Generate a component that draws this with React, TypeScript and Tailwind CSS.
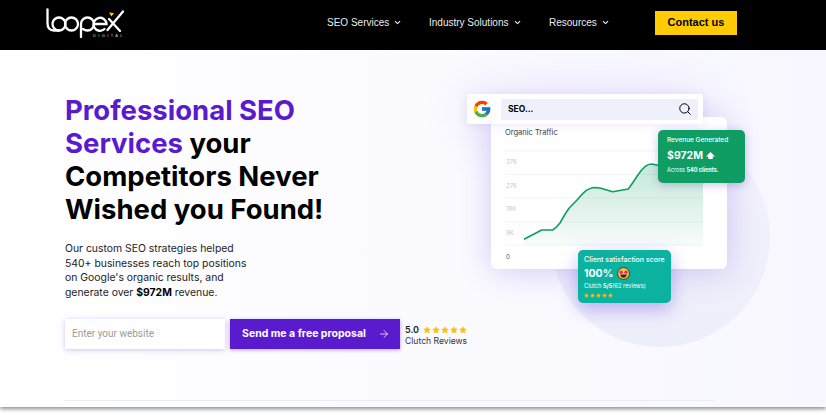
import { ArrowRight, ChevronDown, Search, Star } from 'lucide-react';
import { FcGoogle } from 'react-icons/fc';

const navItems = [
  { label: 'SEO Services', width: 'w-[102px]' },
  { label: 'Industry Solutions', width: 'w-[120px]' },
  { label: 'Resources', width: 'w-[106px]' },
];

const line = 'M524 239.3 L541.7 230 L552.7 230 Q556 228 560 223 Q565 214 569 208.3 Q573 204 577 200 Q582 194 586 190.7 Q590 188 592.7 187.7 Q597 187.5 600 188 L612.7 191.7 L628.3 189 Q632 184 636.7 176.7 Q641 170 645 166.7 Q648 164 651.7 164 L660 165.7 L672 170 L703 150';

function Logo() {
  return (
    <div className="relative w-[80px] h-[40px]">
      <svg viewBox="44 6 80 34" className="w-[80px] h-[34px]" fill="none" stroke="#fff" strokeWidth="2.3" strokeLinecap="round">
        <path d="M46.5 9.5 V23 Q46.5 30.5 53 30.5 L58 30.5" />
        <circle cx="58" cy="24" r="6.5" />
        <circle cx="70.5" cy="24" r="6.5" />
        <path d="M80 37 V24 A6.5 6.5 0 1 1 86.5 30.5 Q84 30.5 82 29" />
        <path d="M93 24 H105.5 A6.5 6.5 0 1 0 103.5 29" />
        <path d="M106.5 30 L122 11.5" />
        <path d="M108 19 L119 31" />
        <path d="M108 12.5 L113 13 L110.5 16.5 Z" fill="#ffcb05" stroke="none" />
      </svg>
      <span className="absolute right-0 top-[28px] text-[4px] leading-none tracking-[2.4px] text-[#cfcfcf] font-['Liberation_Sans',sans-serif]">DIGITAL</span>
    </div>
  );
}

function Stars({ size, gap }: { size: string; gap: string }) {
  return (
    <span className={`flex ${gap}`}>
      {[0, 1, 2, 3, 4].map((i) => (
        <Star key={i} className={`${size} text-[#fdc015] fill-[#fdc015]`} strokeWidth={1} />
      ))}
    </span>
  );
}

function StarFace() {
  return (
    <svg viewBox="0 0 24 24" className="w-[13px] h-[13px]">
      <circle cx="12" cy="12" r="11" fill="#f7c23c" stroke="#3a2a1a" strokeWidth="1.6" />
      <circle cx="7.5" cy="9.5" r="3" fill="#e5237f" />
      <circle cx="16.5" cy="9.5" r="3" fill="#e5237f" />
      <path d="M6 14 H18 Q17 20 12 20 Q7 20 6 14 Z" fill="#3a2a1a" />
    </svg>
  );
}

function Chart() {
  return (
    <div className="relative w-[236px] h-[152px] bg-white rounded-md shadow-[0_2px_32px_rgba(120,90,220,0.3)] pl-[14px] pt-[11px]">
      <p className="text-[7.5px] leading-[10px] text-[#3b3b4f] font-['Inter',sans-serif]">Organic Traffic</p>
      <svg viewBox="491 117 236 152" className="absolute inset-0 w-[236px] h-[152px]" fill="none">
        <defs>
          <linearGradient id="area" x1="0" y1="0" x2="0" y2="1">
            <stop offset="0" stopColor="#0f9d63" stopOpacity="0.28" />
            <stop offset="1" stopColor="#0f9d63" stopOpacity="0.03" />
          </linearGradient>
        </defs>
        {[151, 174.5, 198, 222, 245].map((y) => (
          <path key={y} d={`M505 ${y} H703`} stroke="#f0f0f5" strokeWidth="0.8" />
        ))}
        <path d={`${line} V245.5 H524 Z`} fill="url(#area)" />
        <path d={line} stroke="#0f9d63" strokeWidth="1.6" strokeLinejoin="round" />
      </svg>
      {[
        { t: '37K', c: 'top-[41px] text-[#c4c4cf]' },
        { t: '27K', c: 'top-[65px] text-[#c4c4cf]' },
        { t: '18K', c: 'top-[88px] text-[#c4c4cf]' },
        { t: '9K', c: 'top-[112px] text-[#c4c4cf]' },
        { t: '0', c: 'top-[136px] text-[#555]' },
      ].map((l) => (
        <span key={l.t} className={`absolute left-[15px] text-[6px] leading-[8px] font-['Inter',sans-serif] ${l.c}`}>{l.t}</span>
      ))}
    </div>
  );
}

export default function App() {
  return (
    <div className="w-[826px] h-[415px] overflow-hidden bg-white flex flex-col font-['Inter',sans-serif]">
      <header className="h-[50px] shrink-0 bg-black flex items-center pl-[45px] pb-[5px] relative z-10">
        <div className="w-[282px] pt-[7px]">
          <Logo />
        </div>
        <nav className="flex items-center font-['Liberation_Sans',sans-serif] text-[10px] text-[#ececec]">
          {navItems.map((item) => (
            <a key={item.label} className={`flex items-center gap-[4px] ${item.width}`}>
              {item.label}
              <ChevronDown className="w-[9px] h-[9px]" strokeWidth={3} />
            </a>
          ))}
        </nav>
        <button className="w-[82px] h-[24px] bg-[#ffcb05] text-black font-bold text-[11px] font-['Liberation_Sans',sans-serif]">
          Contact us
        </button>
      </header>

      <main className="relative h-[357px] shrink-0 overflow-hidden flex bg-gradient-to-r from-white via-[#fbfbff] to-[#f8f7ff] shadow-[0_2px_4px_rgba(0,0,0,0.45)]">
        {/* Left: copy + form */}
        <section className="w-[402px] shrink-0 pl-[65px] pt-[44px]">
          <h1 className="text-[27.5px] leading-[33px] font-bold text-black">
            <span className="text-[#5a1bcf]">Professional SEO</span>
            <br />
            <span className="text-[#5a1bcf]">Services</span> your
            <br />
            Competitors Never
            <br />
            Wished you Found!
          </h1>
          <p className="mt-[16px] text-[10.4px] leading-[14.7px] text-[#222]">
            Our custom SEO strategies helped<br />
            540+ businesses reach top positions<br />
            on Google's organic results, and<br />
            generate over <b className="text-black">$972M</b> revenue.
          </p>
          <div className="mt-[18px] flex items-center">
            <input
              placeholder="Enter your website"
              className="w-[160px] h-[30px] shrink-0 bg-white px-[7px] text-[10px] font-['Roboto',sans-serif] text-[#555] placeholder:text-[#9a9a9a] outline-none shadow-[0_1px_5px_rgba(90,27,207,0.28)]"
            />
            <button className="ml-[5px] w-[170px] h-[30px] shrink-0 bg-[#5a1bcf] text-white text-[10.5px] font-bold flex items-center justify-between pl-[12px] pr-[10px] shadow-[0_1px_4px_rgba(90,27,207,0.4)]">
              Send me a free proposal
              <ArrowRight className="w-[12px] h-[12px]" strokeWidth={1.5} />
            </button>
            <div className="ml-[5px] mt-[4px] shrink-0">
              <div className="flex items-center gap-[4px] text-[9px] leading-[11px] font-semibold text-[#222]">
                5.0 <Stars size="w-[8px] h-[8px]" gap="gap-[1px]" />
              </div>
              <p className="text-[8.6px] leading-[12px] text-[#333]">Clutch Reviews</p>
            </div>
          </div>
        </section>

        {/* Right: illustration */}
        <section className="relative flex-1">
          <div className="absolute left-[148px] top-[77px] w-[220px] h-[220px] rounded-full bg-gradient-to-b from-[#f4f1fd] to-[#eceffa]" />
          <div className="absolute left-[62px] top-[42px] w-[240px] h-[40px] rounded-[40px] bg-[#8f6ee0]/20 blur-xl" />
          <div className="relative ml-[89px] mt-[67px] w-fit">
            <Chart />
          </div>
          <div className="absolute left-[65px] top-[44px] w-[236px] h-[30px] rounded-[3px] bg-white flex items-center pl-[5px] pr-[5px] gap-[9px] shadow-[0_2px_10px_rgba(120,90,220,0.12)]">
            <FcGoogle className="w-[20px] h-[20px] shrink-0" />
            <div className="flex-1 h-[21px] rounded-[2px] bg-[#eef0fb] flex items-center justify-between pl-[7px] pr-[6px] text-[8.5px] font-bold text-black">
              SEO...
              <Search className="w-[14px] h-[14px]" strokeWidth={1.7} />
            </div>
          </div>
          <div className="absolute left-[256px] top-[80px] w-[87px] h-[53px] rounded-[5px] bg-[#0f9d63] text-white pl-[9px] pt-[6px] shadow-[0_2px_10px_rgba(90,60,180,0.3)]">
            <p className="text-[6.5px] leading-[9px] font-medium">Revenue Generated</p>
            <p className="mt-[4px] flex items-center gap-[3px] text-[10.5px] leading-[13px] font-bold">
              $972M
              <svg viewBox="0 0 10 10" className="w-[9px] h-[9px]" fill="#fff"><path d="M5 1 L10 6 H7.5 V9 H2.5 V6 H0 Z" /></svg>
            </p>
            <p className="mt-[4px] text-[5.5px] leading-[8px]">Across <b>540 clients.</b></p>
          </div>
          <div className="absolute left-[176px] top-[200px] w-[93px] h-[53px] rounded-[5px] bg-[#0cb2a0] text-white pl-[6px] pt-[5px] shadow-[0_6px_18px_rgba(110,70,220,0.4)]">
            <p className="text-[7px] leading-[9px] font-medium">Client satisfaction score</p>
            <p className="mt-[3px] flex items-center gap-[4px] text-[10.5px] leading-[13px] font-bold">
              100% <StarFace />
            </p>
            <p className="mt-[2px] text-[5.7px] leading-[8px]">Clutch <b>5/5</b>(62 reviews)</p>
            <div className="mt-[3px]">
              <Stars size="w-[5px] h-[5px]" gap="gap-[1px]" />
            </div>
          </div>
        </section>

        <div className="absolute left-[65px] right-[111px] bottom-[6px] h-px bg-[#e6ecf8]" />
      </main>
    </div>
  );
}
